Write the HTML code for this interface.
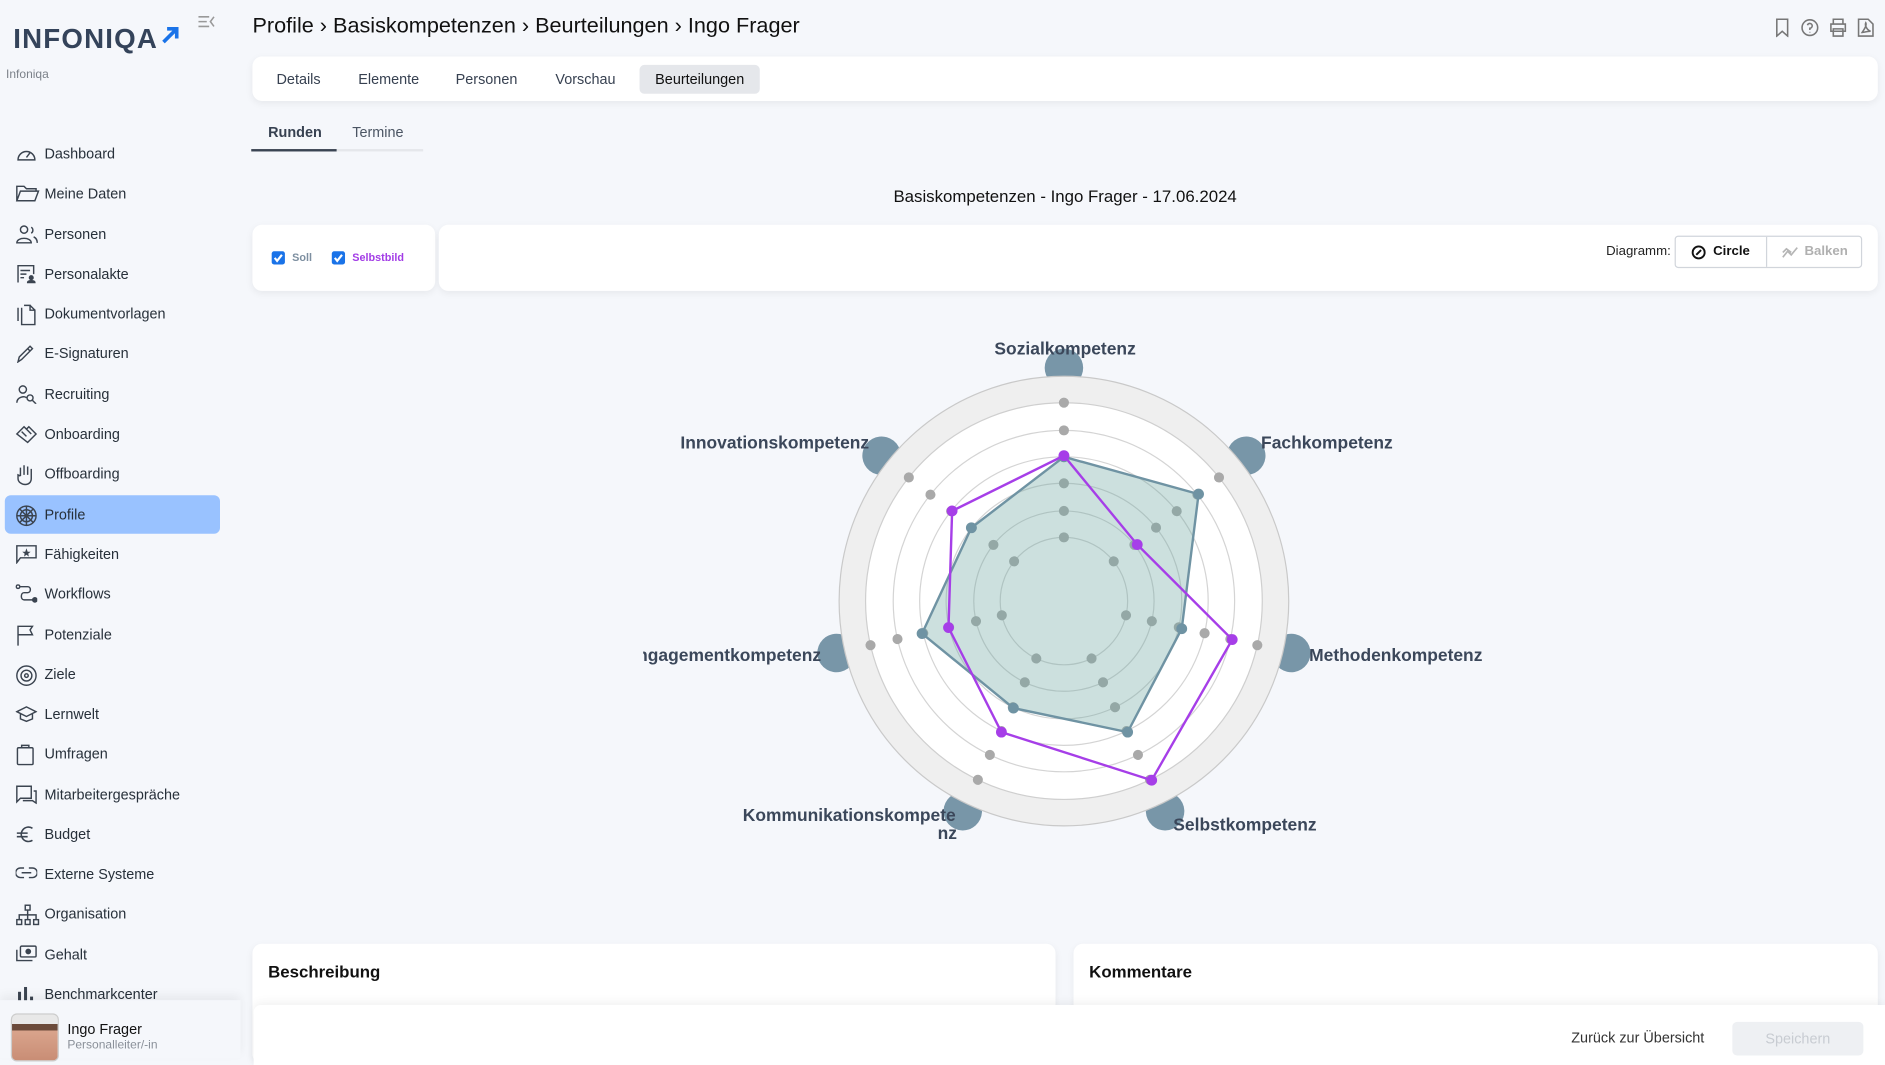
<!DOCTYPE html>
<html><head><meta charset="utf-8">
<style>
*{box-sizing:border-box;margin:0;padding:0}
html,body{width:1885px;height:1058px;overflow:hidden;background:#f5f7fb}
#w{position:absolute;left:0;top:0;width:1568px;height:880px;transform:scale(1.20217);transform-origin:0 0;font-family:"Liberation Sans",sans-serif;color:#1f2329}
.a{position:absolute}
.nav{position:absolute;left:4px;width:179px;height:32px;border-radius:5px;font-size:12px;color:#27303a;line-height:32px;padding-left:33px}
.nav svg{position:absolute;left:9px;top:8px}
.card{position:absolute;background:#fff;border-radius:8px;box-shadow:0 2px 6px rgba(0,0,0,.06)}
.tab{position:absolute;top:7px;height:23px;line-height:23px;font-size:12px;color:#374151;padding:0 13px;border-radius:4px}
</style></head><body><div id="w">
<!-- logo -->
<div class="a" style="left:11px;top:19px;font-size:23px;font-weight:bold;color:#34435a;letter-spacing:1px">INFONIQA</div>
<svg class="a" style="left:134px;top:21px" width="16" height="16" viewBox="0 0 16 16"><path d="M2 14 L12 4 M5 3 H13 V11" stroke="#1a73e8" stroke-width="3" fill="none"/></svg>
<div class="a" style="left:5px;top:57px;font-size:10px;color:#7b8189">Infoniqa</div>
<svg class="a" style="left:165px;top:13px" width="14" height="11" viewBox="0 0 14 11"><path d="M0 1H9M0 5H7M0 9H9M13 1L10 5L13 9" stroke="#999" stroke-width="1.3" fill="none"/></svg>

<div class="nav" style="top:112px"><svg width="18" height="16" viewBox="0 0 18 16" fill="none" stroke="#3b4450" stroke-width="1.2"><path d="M2 13A7 7 0 1 1 16 13Z"/><path d="M9 11L12 7"/></svg>Dashboard</div>
<div class="nav" style="top:145px"><svg width="20" height="16" viewBox="0 0 20 16" fill="none" stroke="#3b4450" stroke-width="1.2"><path d="M1 14V2H7L9 4H17V6M1 14L4 6H19L16 14Z"/></svg>Meine Daten</div>
<div class="nav" style="top:179px"><svg width="20" height="16" viewBox="0 0 20 16" fill="none" stroke="#3b4450" stroke-width="1.2"><circle cx="7" cy="4" r="3"/><path d="M1 15C1 10 13 10 13 15ZM13 2A3 3 0 0 1 13 7M15 10C17 11 18 13 18 15"/></svg>Personen</div>
<div class="nav" style="top:212px"><svg width="18" height="16" viewBox="0 0 18 16" fill="none" stroke="#3b4450" stroke-width="1.2"><path d="M2 15V1H15V8M4 5H12M4 8H9M4 11H7"/><circle cx="13" cy="11" r="1.5" fill="#3b4450"/><path d="M10 15C10 13 16 13 16 15Z" fill="#3b4450"/></svg>Personalakte</div>
<div class="nav" style="top:245px"><svg width="18" height="18" viewBox="0 0 18 18" fill="none" stroke="#3b4450" stroke-width="1.2"><path d="M5 3V17H16V5H12V1H7M12 1L16 5M2 3V14"/></svg>Dokumentvorlagen</div>
<div class="nav" style="top:278px"><svg width="16" height="16" viewBox="0 0 16 16" fill="none" stroke="#3b4450" stroke-width="1.2"><path d="M2 15L3 11L12 2L14 4L5 13ZM10 4L12 6"/></svg>E-Signaturen</div>
<div class="nav" style="top:312px"><svg width="18" height="16" viewBox="0 0 18 16" fill="none" stroke="#3b4450" stroke-width="1.2"><circle cx="6" cy="4" r="3"/><path d="M1 15C1 10 8 9 9 11"/><circle cx="12" cy="11" r="2.5"/><path d="M14 13L17 16"/></svg>Recruiting</div>
<div class="nav" style="top:345px"><svg width="18" height="16" viewBox="0 0 18 16" fill="none" stroke="#3b4450" stroke-width="1.2"><path d="M1 8L7 2L9 4L11 2L17 8L10 15L1 8ZM5 6L9 10M9 4L13 8"/></svg>Onboarding</div>
<div class="nav" style="top:378px"><svg width="16" height="18" viewBox="0 0 16 18" fill="none" stroke="#3b4450" stroke-width="1.2"><path d="M4 10V3M7 9V1M10 9V2M13 10V4M4 10L2 9V12C2 15 5 17 8 17C11 17 13 15 13 12V10"/></svg>Offboarding</div>
<div class="nav" style="top:412px;background:#99c2ff"><svg width="18" height="18" viewBox="0 0 18 18" fill="none" stroke="#3b4450" stroke-width="1.2"><circle cx="9" cy="9" r="8"/><circle cx="9" cy="9" r="5"/><path d="M9 1V17M1 9H17M3 3L15 15M15 3L3 15"/></svg>Profile</div>
<div class="nav" style="top:445px"><svg width="18" height="16" viewBox="0 0 18 16" fill="none" stroke="#3b4450" stroke-width="1.2"><path d="M1 15V1H17V11H4Z"/><path d="M9 3L10 6H12.5L10.5 7.5L11 10L9 8.5L7 10L7.5 7.5L5.5 6H8Z" fill="#3b4450" stroke="none"/></svg>Fähigkeiten</div>
<div class="nav" style="top:478px"><svg width="18" height="16" viewBox="0 0 18 16" fill="none" stroke="#3b4450" stroke-width="1.2"><circle cx="2" cy="2" r="1.5"/><path d="M4 2H10C13 2 13 7 10 7H7C4 7 4 13 7 13H15"/><circle cx="16" cy="13" r="1.8" fill="#3b4450"/></svg>Workflows</div>
<div class="nav" style="top:512px"><svg width="16" height="18" viewBox="0 0 16 18" fill="none" stroke="#3b4450" stroke-width="1.2"><path d="M2 17V1H14L12 4L14 8H2"/></svg>Potenziale</div>
<div class="nav" style="top:545px"><svg width="18" height="18" viewBox="0 0 18 18" fill="none" stroke="#3b4450" stroke-width="1.2"><circle cx="9" cy="9" r="8"/><circle cx="9" cy="9" r="4.5"/><circle cx="9" cy="9" r="1.5"/></svg>Ziele</div>
<div class="nav" style="top:578px"><svg width="18" height="16" viewBox="0 0 18 16" fill="none" stroke="#3b4450" stroke-width="1.2"><path d="M1 6L9 2L17 6L9 10ZM4 8V12L9 14L14 12V8"/></svg>Lernwelt</div>
<div class="nav" style="top:611px"><svg width="16" height="18" viewBox="0 0 16 18" fill="none" stroke="#3b4450" stroke-width="1.2"><rect x="1.5" y="3" width="13" height="14" rx="1"/><path d="M5 3V1H11V3"/></svg>Umfragen</div>
<div class="nav" style="top:645px"><svg width="18" height="16" viewBox="0 0 18 16" fill="none" stroke="#3b4450" stroke-width="1.2"><path d="M1 11V1H13V11H4L1 14ZM15 5H17V15L14 13H6"/></svg>Mitarbeitergespräche</div>
<div class="nav" style="top:678px"><svg width="16" height="16" viewBox="0 0 16 16" fill="none" stroke="#3b4450" stroke-width="1.3"><path d="M14 3A6 6 0 1 0 14 13M1 7H10M1 10H10"/></svg>Budget</div>
<div class="nav" style="top:711px"><svg width="18" height="14" viewBox="0 0 18 14" fill="none" stroke="#3b4450" stroke-width="1.2"><path d="M7 3H4A4 4 0 0 0 4 11H7M11 3H14A4 4 0 0 1 14 11H11M5 7H13"/></svg>Externe Systeme</div>
<div class="nav" style="top:744px"><svg width="20" height="18" viewBox="0 0 20 18" fill="none" stroke="#3b4450" stroke-width="1.2"><rect x="8" y="1" width="4" height="4"/><rect x="1" y="13" width="4" height="4"/><rect x="8" y="13" width="4" height="4"/><rect x="15" y="13" width="4" height="4"/><path d="M10 5V13M3 13V9H17V13"/></svg>Organisation</div>
<div class="nav" style="top:778px"><svg width="18" height="16" viewBox="0 0 18 16" fill="none" stroke="#3b4450" stroke-width="1.2"><rect x="4" y="1" width="13" height="9" rx="1"/><circle cx="10.5" cy="5.5" r="1.8" fill="#3b4450"/><path d="M1 4V13H14"/></svg>Gehalt</div>
<div class="nav" style="top:811px"><svg width="16" height="16" viewBox="0 0 16 16" fill="#3b4450"><rect x="2" y="6" width="2.5" height="10"/><rect x="7" y="2" width="2.5" height="14"/><rect x="12" y="10" width="2.5" height="6"/></svg>Benchmarkcenter</div>
<div class="a" style="left:0;top:832px;width:200px;height:48px;background:#f5f7fb;box-shadow:0 -4px 8px rgba(0,0,0,.06)"></div>
<div class="a" style="left:9px;top:843px;width:40px;height:40px;border-radius:5px;border:1px solid #ccc;background:linear-gradient(#e8e8e8 0,#e8e8e8 20%,#6b4a3a 20%,#6b4a3a 35%,#d9a48c 35%,#c98d75 100%)"></div>
<div class="a" style="left:56px;top:849px;font-size:12px;color:#111">Ingo Frager</div>
<div class="a" style="left:56px;top:864px;font-size:10px;color:#8a9099">Personalleiter/-in</div>

<!-- header -->
<div class="a" style="left:210px;top:11px;font-size:18px;color:#111">Profile › Basiskompetenzen › Beurteilungen › Ingo Frager</div>
<svg class="a" style="left:1476px;top:15px" width="84" height="16" viewBox="0 0 84 16" fill="none" stroke="#777" stroke-width="1.3"><path d="M2 1H11V15L6.5 11L2 15Z"/><circle cx="29.5" cy="8" r="6.5"/><path d="M27.5 6A2 2 0 1 1 29.5 8.5V10M29.5 11.5V12"/><path d="M49 5V1H57V5M47 5H59V11H47ZM49 9H57V15H49Z"/><path d="M70 1H78L82 5V15H70ZM73 12C75 9 77 6 76 4C75 6 77 10 80 11C77 11 74 12 73 12Z"/></svg>

<!-- tabs card -->
<div class="card" style="left:210px;top:47px;width:1352px;height:37px">
<div class="tab" style="left:7px;top:8px">Details</div>
<div class="tab" style="left:75px;top:8px">Elemente</div>
<div class="tab" style="left:156px;top:8px">Personen</div>
<div class="tab" style="left:239px;top:8px">Vorschau</div>
<div class="tab" style="left:322px;top:7px;height:24px;line-height:25px;background:#e5e7eb;color:#111">Beurteilungen</div>
</div>
<div class="a" style="left:223px;top:103px;font-size:12px;font-weight:bold;color:#374151">Runden</div>
<div class="a" style="left:293px;top:103px;font-size:12px;color:#4b5563">Termine</div>
<div class="a" style="left:209px;top:124px;width:143px;height:2px;background:#e5e7eb"></div>
<div class="a" style="left:209px;top:124px;width:71px;height:2px;background:#3a4453"></div>

<div class="a" style="left:0;width:1772px;text-align:center;top:155px;font-size:14px;color:#111">Basiskompetenzen - Ingo Frager - 17.06.2024</div>

<div class="card" style="left:210px;top:187px;width:152px;height:55px"></div>
<div class="a" style="left:226px;top:209px;width:11px;height:11px;border-radius:2px;background:#1a73e8"></div>
<div class="a" style="left:276px;top:209px;width:11px;height:11px;border-radius:2px;background:#1a73e8"></div>
<svg class="a" style="left:226px;top:209px" width="62" height="11" viewBox="0 0 62 11" fill="none" stroke="#fff" stroke-width="1.8"><path d="M2.5 5.5L4.5 8L8.5 3"/><path d="M52.5 5.5L54.5 8L58.5 3"/></svg>
<div class="a" style="left:243px;top:209px;font-size:9px;font-weight:bold;color:#7d8fa0">Soll</div>
<div class="a" style="left:293px;top:209px;font-size:9px;font-weight:bold;color:#a23ce6">Selbstbild</div>

<div class="card" style="left:365px;top:187px;width:1197px;height:55px"></div>
<div class="a" style="left:1336px;top:203px;font-size:11px;color:#222">Diagramm:</div>
<div class="a" style="left:1393px;top:196px;width:156px;height:27px;border:1px solid #d1d5db;border-radius:3px;overflow:hidden;background:#fff">
<div class="a" style="left:75px;top:0;width:1px;height:27px;background:#d1d5db"></div>
<svg class="a" style="left:13px;top:7px" width="12" height="12" viewBox="0 0 12 12" fill="none" stroke="#111" stroke-width="1.6"><circle cx="6" cy="6" r="5"/><path d="M4 8L8 4"/></svg>
<div class="a" style="left:31px;top:6px;font-size:11px;font-weight:bold;color:#111">Circle</div>
<svg class="a" style="left:88px;top:7px" width="14" height="12" viewBox="0 0 14 12" fill="none" stroke="#b5b5b5" stroke-width="1.4"><path d="M1 10L5 5L8 8L13 2M1 6L4 3L8 6"/></svg>
<div class="a" style="left:107px;top:6px;font-size:11px;font-weight:bold;color:#b0b0b0">Balken</div>
</div>

<!-- chart -->
<svg class="a" style="left:0;top:0" width="1568" height="880" viewBox="0 0 1568 880">
<defs>
<clipPath id="c"><rect x="535" y="250" width="700" height="500"/></clipPath>
<g id="ad" fill="#a9a9a9"><circle cx="0" cy="-53" r="4.2"/><circle cx="0" cy="-75" r="4.2"/><circle cx="0" cy="-98" r="4.2"/><circle cx="0" cy="-120" r="4.2"/><circle cx="0" cy="-142" r="4.2"/><circle cx="0" cy="-165" r="4.2"/></g>
<circle id="bl" cx="0" cy="-194" r="16" fill="#7896a8"/>
</defs>
<g clip-path="url(#c)">
<g transform="translate(885,500)">
<use href="#bl"/><use href="#bl" transform="rotate(51.43)"/><use href="#bl" transform="rotate(102.86)"/><use href="#bl" transform="rotate(154.29)"/><use href="#bl" transform="rotate(205.71)"/><use href="#bl" transform="rotate(257.14)"/><use href="#bl" transform="rotate(308.57)"/>
<circle r="187" fill="#efefef" stroke="#c9c9c9"/>
<circle r="165" fill="#fff" stroke="#cfcfcf"/>
<g fill="none" stroke="#d4d4d4"><circle r="142"/><circle r="120"/><circle r="98"/><circle r="75"/><circle r="53"/></g>
<use href="#ad"/><use href="#ad" transform="rotate(51.43)"/><use href="#ad" transform="rotate(102.86)"/><use href="#ad" transform="rotate(154.29)"/><use href="#ad" transform="rotate(205.71)"/><use href="#ad" transform="rotate(257.14)"/><use href="#ad" transform="rotate(308.57)"/>
</g>
<polygon points="885,380 997,411 983,523 938,609 843,589 767,527 808,439" fill="rgba(110,165,160,0.35)" stroke="#6f93a3" stroke-width="2"/>
<g fill="#6f93a3"><circle cx="885" cy="380" r="4.5"/><circle cx="997" cy="411" r="4.5"/><circle cx="983" cy="523" r="4.5"/><circle cx="938" cy="609" r="4.5"/><circle cx="843" cy="589" r="4.5"/><circle cx="767" cy="527" r="4.5"/><circle cx="808" cy="439" r="4.5"/></g>
<polygon points="885,379 946,453 1025,532 958,649 833,609 789,522 792,425" fill="none" stroke="#a63ee8" stroke-width="2"/>
<g fill="#a63ee8"><circle cx="885" cy="379" r="4.5"/><circle cx="946" cy="453" r="4.5"/><circle cx="1025" cy="532" r="4.5"/><circle cx="958" cy="649" r="4.5"/><circle cx="833" cy="609" r="4.5"/><circle cx="789" cy="522" r="4.5"/><circle cx="792" cy="425" r="4.5"/></g>
<g font-family="Liberation Sans,sans-serif" font-size="14.5" font-weight="bold" fill="#3b475a">
<text x="886" y="295" text-anchor="middle">Sozialkompetenz</text>
<text x="1049" y="373">Fachkompetenz</text>
<text x="1089" y="550">Methodenkompetenz</text>
<text x="976" y="691">Selbstkompetenz</text>
<text x="795" y="683" text-anchor="end">Kommunikationskompete</text>
<text x="788" y="698" text-anchor="middle">nz</text>
<text x="723" y="373" text-anchor="end">Innovationskompetenz</text>
<text x="683" y="550" text-anchor="end">Engagementkompetenz</text>
</g>
</g>
</svg>

<!-- bottom -->
<div class="card" style="left:210px;top:785px;width:668px;height:100px"></div>
<div class="card" style="left:893px;top:785px;width:669px;height:100px"></div>
<div class="a" style="left:223px;top:800px;font-size:14px;font-weight:bold;color:#111">Beschreibung</div>
<div class="a" style="left:906px;top:800px;font-size:14px;font-weight:bold;color:#111">Kommentare</div>
<div class="a" style="left:211px;top:836px;width:1357px;height:50px;background:#fff;border-radius:6px 0 0 0;box-shadow:0 -2px 8px rgba(0,0,0,.06)"></div>
<div class="a" style="left:1307px;top:856px;font-size:12px;color:#333">Zurück zur Übersicht</div>
<div class="a" style="left:1441px;top:850px;width:109px;height:28px;background:#eef0f3;border-radius:4px;font-size:12px;color:#c8ccd2;text-align:center;line-height:28px">Speichern</div>
</div></body></html>
